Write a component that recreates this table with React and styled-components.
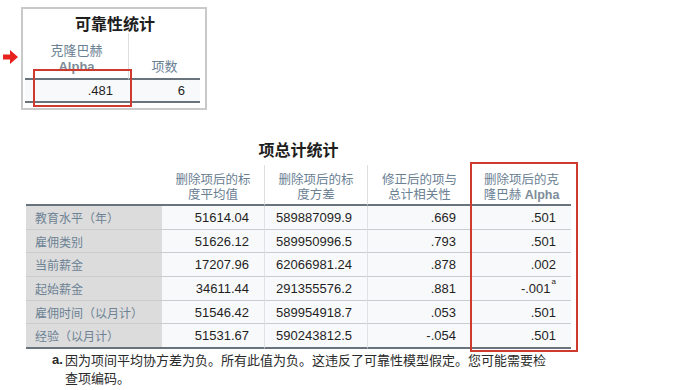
import React from "react";
import styled, { createGlobalStyle } from "styled-components";

const Global = createGlobalStyle`
  html, body { margin: 0; padding: 0; background: #ffffff; }
  body { font-family: "Liberation Sans", "Noto Sans CJK SC", sans-serif; }
`;

const CJK = `"Noto Sans CJK SC", "Liberation Sans", sans-serif`;
const NUM = `"Liberation Sans", "Noto Sans CJK SC", sans-serif`;

const Page = styled.div`
  position: relative;
  width: 680px;
  height: 390px;
  display: flex;
  flex-direction: column;
  padding-top: 7px;
  box-sizing: border-box;
`;

const Frame = styled.div`
  margin-left: 21px;
  width: 186px;
  height: 103px;
  box-sizing: border-box;
  border: 2px solid #c9c9c9;
  padding: 4px 0 0 2px;
  background: #fff;
`;

const Title = styled.div`
  font-family: ${CJK};
  font-weight: bold;
  font-size: 16px;
  line-height: 20px;
  color: #1e1e1e;
  text-align: center;
  width: ${(p) => p.$w}px;
`;

const Grid = styled.div`
  display: grid;
  grid-template-columns: ${(p) => p.$cols};
`;

const Head = styled.div`
  height: ${(p) => p.$h}px;
  box-sizing: border-box;
  display: flex;
  flex-direction: column;
  justify-content: flex-end;
  align-items: center;
  text-align: center;
  padding: 0 4px ${(p) => p.$pb}px;
  font-family: ${NUM};
  font-size: ${(p) => p.$fs || 12.5}px;
  color: #6a8093;
  border-bottom: 2px solid #68737c;
  border-left: ${(p) => (p.$sep ? "1px solid #dcdfe2" : "none")};
`;

const HeadLine = styled.div`
  height: ${(p) => p.$lh}px;
  line-height: ${(p) => p.$lh}px;
  white-space: nowrap;
`;

const HeadLatin = styled.span`
  font-weight: bold;
  color: #7d8c98;
`;

const Cell = styled.div`
  height: ${(p) => p.$h}px;
  box-sizing: border-box;
  display: flex;
  align-items: center;
  justify-content: ${(p) => (p.$label ? "flex-start" : "flex-end")};
  padding: ${(p) => (p.$label ? "0 0 0 9px" : "0 15px 0 0")};
  font-family: ${(p) => (p.$label ? CJK : NUM)};
  font-size: ${(p) => (p.$label ? 12 : 13)}px;
  color: ${(p) => (p.$label ? "#6d8294" : "#1f1f1f")};
  background: ${(p) => (p.$label ? "#dcdcdc" : "#f8f9fa")};
  border-bottom: ${(p) => (p.$last ? "2px solid #68737c" : "1px solid #c9cdd0")};
  border-left: ${(p) => (p.$sep ? "1px solid #dfe2e5" : "none")};
`;

const Sup = styled.sup`
  font-size: 8px;
  line-height: 0;
  margin-left: 1px;
  align-self: flex-start;
  margin-top: 5px;
`;

const Section = styled.div`
  margin: 29px 0 0 26px;
  display: flex;
  flex-direction: column;
`;

const TitleGap = styled.div`
  height: 6px;
`;

const Note = styled.div`
  display: flex;
  margin-left: 52px;
  margin-top: 2px;
  width: 500px;
  font-family: ${CJK};
  font-size: 13px;
  line-height: 18px;
  color: #2a2a2a;
`;

const NoteMark = styled.span`
  width: 13px;
  flex: none;
  font-family: ${NUM};
  font-weight: bold;
`;

const RedBox = styled.div`
  position: absolute;
  left: ${(p) => p.$x}px;
  top: ${(p) => p.$y}px;
  width: ${(p) => p.$w}px;
  height: ${(p) => p.$h}px;
  box-sizing: border-box;
  border: 2px solid #cf3a2f;
  pointer-events: none;
`;

const Arrow = styled.svg`
  position: absolute;
  left: 3px;
  top: 50px;
`;

const rows = [
  ["教育水平（年）", "51614.04", "589887099.9", ".669", ".501"],
  ["雇佣类别", "51626.12", "589950996.5", ".793", ".501"],
  ["当前薪金", "17207.96", "62066981.24", ".878", ".002"],
  ["起始薪金", "34611.44", "291355576.2", ".881", "-.001", true],
  ["雇佣时间（以月计）", "51546.42", "589954918.7", ".053", ".501"],
  ["经验（以月计）", "51531.67", "590243812.5", "-.054", ".501"],
];

const heads = [
  [],
  ["删除项后的标", "度平均值"],
  ["删除项后的标", "度方差"],
  ["修正后的项与", "总计相关性"],
  ["删除项后的克", <>隆巴赫 <HeadLatin>Alpha</HeadLatin></>],
];

export default function App() {
  return (
    <>
      <Global />
      <Page>
        <Frame>
          <Title $w={180}>可靠性统计</Title>
          <Grid $cols="103px 72px">
            <Head $h={47} $pb={3} $fs={13}>
              <HeadLine $lh={16}>克隆巴赫</HeadLine>
              <HeadLine $lh={16}><HeadLatin>Alpha</HeadLatin></HeadLine>
            </Head>
            <Head $h={47} $pb={3} $fs={13} $sep>
              <HeadLine $lh={16}>项数</HeadLine>
            </Head>
            <Cell $h={23} $last>.481</Cell>
            <Cell $h={23} $last>6</Cell>
          </Grid>
        </Frame>

        <Section>
          <Title $w={545}>项总计统计</Title>
          <TitleGap />
          <Grid $cols="136px 102px 103px 104px 100px">
            {heads.map((h, i) => (
              <Head key={i} $h={41} $pb={1} $sep={i > 1}>
                {h.map((line, li) => (
                  <HeadLine key={li} $lh={15}>{line}</HeadLine>
                ))}
              </Head>
            ))}
            {rows.map((r, ri) =>
              r.slice(0, 5).map((v, ci) => (
                <Cell key={ri + "-" + ci} $h={ri === 5 ? 25 : 23.7} $label={ci === 0} $sep={ci > 1} $last={ri === 5}>
                  {v}
                  {ci === 4 && r[5] ? <Sup>a</Sup> : null}
                </Cell>
              ))
            )}
          </Grid>
        </Section>

        <Note>
          <NoteMark>a.</NoteMark>
          <span>因为项间平均协方差为负。所有此值为负。这违反了可靠性模型假定。您可能需要检查项编码。</span>
        </Note>

        <Arrow width="15" height="14" viewBox="0 0 15 14">
          <path d="M0 4.5 H7 V0 L15 7 L7 14 V9.5 H0 Z" fill="#e8231f" />
        </Arrow>
        <RedBox $x={33} $y={69} $w={99} $h={38} />
        <RedBox $x={470} $y={162} $w={108} $h={190} />
      </Page>
    </>
  );
}
